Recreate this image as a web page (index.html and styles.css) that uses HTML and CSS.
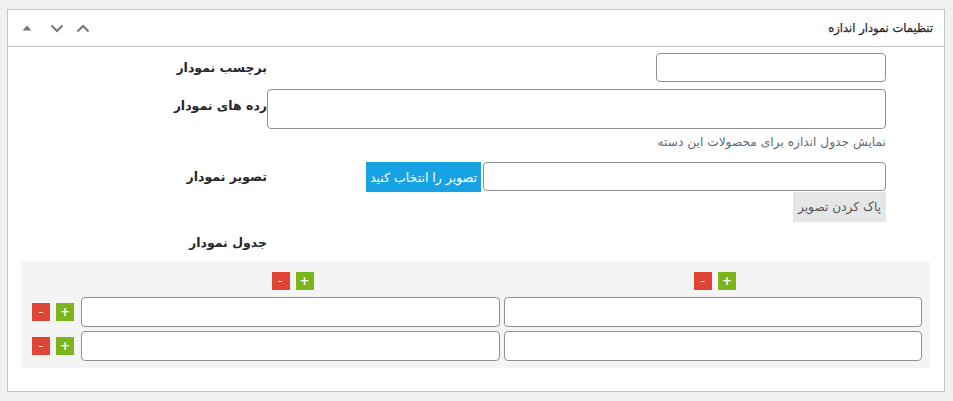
FILE: index.html
```html
<!DOCTYPE html>
<html lang="fa" dir="rtl">
<head>
<meta charset="utf-8">
<title>تنظیمات نمودار اندازه</title>
<link rel="stylesheet" href="styles.css">
</head>
<body>
<div class="postbox">
  <div class="postbox-header">
    <h2 class="hndle">تنظیمات نمودار اندازه</h2>
    <div class="handle-actions">
      <button class="handle-btn" type="button" aria-label="بالا">
        <svg width="14" height="9" viewBox="0 0 14 9"><path d="M1.5 7.5 L7 2 L12.5 7.5" fill="none" stroke="#72777c" stroke-width="2"/></svg>
      </button>
      <button class="handle-btn" type="button" aria-label="پایین">
        <svg width="14" height="9" viewBox="0 0 14 9"><path d="M1.5 1.5 L7 7 L12.5 1.5" fill="none" stroke="#72777c" stroke-width="2"/></svg>
      </button>
      <button class="handle-btn toggle" type="button" aria-label="باز و بسته">
        <svg width="10" height="6" viewBox="0 0 10 6"><path d="M0.5 5.5 L5 0.5 L9.5 5.5 Z" fill="#72777c"/></svg>
      </button>
    </div>
  </div>
  <div class="inside">
    <div class="form-row row-label">
      <div class="field"><input class="text-input short" type="text"></div>
      <div class="label">برچسب نمودار</div>
    </div>
    <div class="form-row row-cats">
      <div class="field">
        <textarea class="text-area"></textarea>
        <p class="description">نمایش جدول اندازه برای محصولات این دسته</p>
      </div>
      <div class="label top">رده های نمودار</div>
    </div>
    <div class="form-row row-image">
      <div class="field">
        <div class="image-picker">
          <input class="text-input wide" type="text">
          <button class="btn-select" type="button">تصویر را انتخاب کنید</button>
        </div>
        <button class="btn-clear" type="button">پاک کردن تصویر</button>
      </div>
      <div class="label">تصویر نمودار</div>
    </div>
    <div class="form-row row-table">
      <div class="field"></div>
      <div class="label">جدول نمودار</div>
    </div>
    <div class="chart-table">
      <div class="col-actions"><button class="mini plus" type="button">+</button><button class="mini minus" type="button">-</button></div>
      <div class="col-actions"><button class="mini plus" type="button">+</button><button class="mini minus" type="button">-</button></div>
      <div></div>

      <input class="cell" type="text">
      <input class="cell" type="text">
      <div class="row-actions"><button class="mini plus" type="button">+</button><button class="mini minus" type="button">-</button></div>

      <input class="cell" type="text">
      <input class="cell" type="text">
      <div class="row-actions"><button class="mini plus" type="button">+</button><button class="mini minus" type="button">-</button></div>
    </div>
  </div>
</div>
</body>
</html>
```

FILE: styles.css
```css
* { box-sizing: border-box; }

html, body {
  margin: 0;
  padding: 0;
}

body {
  background: #f0f0f1;
  font-family: Tahoma, "DejaVu Sans", sans-serif;
  font-size: 12px;
  color: #1d2327;
  padding: 9px 8px 9px 7px;
}

.postbox {
  background: #fff;
  border: 1px solid #c3c4c7;
  width: 938px;
  height: 383px;
}

.postbox-header {
  height: 37px;
  border-bottom: 1px solid #c3c4c7;
  display: flex;
  align-items: center;
  justify-content: space-between;
}

.hndle {
  margin: 0;
  padding: 0 11px 0 0;
  font-size: 11.5px;
  font-weight: normal;
  color: #1d2327;
  line-height: 20px;
  -webkit-text-stroke: 0.25px #1d2327;
}

.handle-actions {
  display: flex;
  align-items: center;
  padding-left: 6px;
}

.handle-btn {
  width: 26px;
  height: 26px;
  padding: 0;
  border: 0;
  background: transparent;
  display: flex;
  align-items: center;
  justify-content: center;
}

.handle-btn.toggle {
  margin-right: 4px;
}

.inside {
  padding: 6px 0 0 0;
}

.form-row {
  display: grid;
  grid-template-columns: 619px 258px;
  padding-right: 58px;
}

.label {
  font-weight: bold;
  font-size: 12.5px;
  color: #23282d;
  display: flex;
  align-items: center;
  line-height: 20px;
}

.label.top {
  align-items: flex-start;
  padding-top: 7px;
}

.field {
  display: flex;
  flex-direction: column;
  align-items: flex-start;
}

.text-input {
  height: 29px;
  border: 1px solid #8c8f94;
  border-radius: 4px;
  background: #fff;
  margin: 0;
  padding: 0 8px;
  font: inherit;
}

.text-input.short { width: 230px; }
.text-input.wide { width: 403px; height: 29px; }

.row-cats { margin-top: 7px; }

.text-area {
  width: 619px;
  height: 40px;
  border: 1px solid #8c8f94;
  border-radius: 4px;
  resize: none;
  margin: 0;
  display: block;
  font: inherit;
}

.description {
  margin: 4px 0 0;
  line-height: 18px;
  color: #646970;
  font-size: 12.2px;
}

.row-image { margin-top: 11px; }
.row-image .label { height: 30px; }

.image-picker {
  display: flex;
  align-items: flex-start;
  gap: 2px;
}

.btn-select {
  height: 30px;
  width: 115px;
  border: 0;
  margin: 0;
  padding: 0;
  background: #17a3e3;
  color: #fff;
  font: inherit;
  font-size: 12.5px;
}

.btn-clear {
  height: 30px;
  width: 93px;
  border: 0;
  margin: 0;
  padding: 0;
  background: #e6e6e6;
  color: #555;
  font: inherit;
  font-size: 12.2px;
}

.row-table { margin-top: 11px; }

.chart-table {
  margin: 9px 14px 0 13px;
  background: #f4f4f4;
  padding: 10px 8px 7px 11px;
  display: grid;
  grid-template-columns: 418px 419px 1fr;
  column-gap: 4px;
  row-gap: 4px;
}

.col-actions {
  display: flex;
  justify-content: center;
  gap: 6px;
  margin-bottom: 3px;
  padding-left: 4px;
}

.row-actions {
  display: flex;
  justify-content: flex-end;
  align-items: center;
  gap: 6px;
}

.mini {
  width: 18px;
  height: 18px;
  border: 0;
  padding: 0;
  margin: 0;
  color: #fff;
  font-family: "DejaVu Sans", sans-serif;
  font-size: 12px;
  line-height: 18px;
  text-align: center;
}

.mini.minus { background: #df4435; }
.mini.plus { background: #7cb41b; font-weight: bold; }

.cell {
  height: 30px;
  border: 1px solid #8c8f94;
  border-radius: 4px;
  background: #fff;
  margin: 0;
  width: 100%;
  font: inherit;
}
```
